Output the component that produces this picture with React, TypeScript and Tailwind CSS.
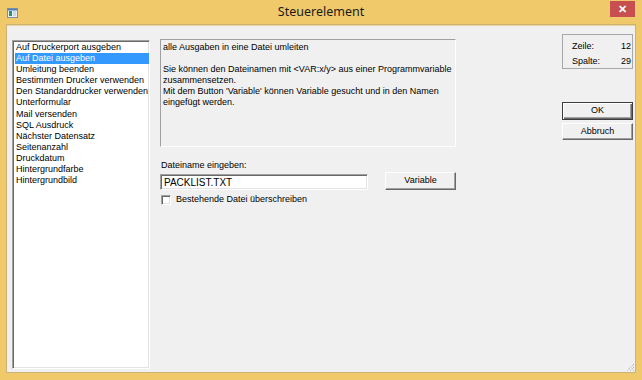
const items = [
  "Auf Druckerport ausgeben",
  "Auf Datei ausgeben",
  "Umleitung beenden",
  "Bestimmten Drucker verwenden",
  "Den Standarddrucker verwenden",
  "Unterformular",
  "Mail versenden",
  "SQL Ausdruck",
  "Nächster Datensatz",
  "Seitenanzahl",
  "Druckdatum",
  "Hintergrundfarbe",
  "Hintergrundbild",
];

const sunken =
  "border border-t-[#a0a0a0] border-l-[#a0a0a0] border-r-white border-b-white shadow-[inset_1px_1px_0_#696969,inset_-1px_-1px_0_#e3e3e3]";
const raised =
  "border border-t-white border-l-white border-r-[#696969] border-b-[#696969] shadow-[inset_-1px_-1px_0_#a0a0a0] bg-[#f0f0f0]";

function WinIcon() {
  return (
    <svg width="11" height="10" viewBox="0 0 11 10">
      <rect x="0.5" y="0.5" width="10" height="9" fill="#e8eef4" stroke="#7b8ea3" />
      <rect x="1" y="1" width="9" height="1.5" fill="#4f7fb8" />
      <rect x="2" y="3" width="3" height="5" fill="#2f8f6f" />
      <rect x="6" y="3" width="3" height="5" fill="#cfd8e2" />
    </svg>
  );
}

function Grip() {
  return (
    <svg width="9" height="9" viewBox="0 0 9 9" className="absolute bottom-0 right-0">
      <path d="M8 1 L1 8 M8 4 L4 8 M8 7 L7 8" stroke="#9a9a9a" strokeWidth="1" strokeDasharray="1 1" />
    </svg>
  );
}

export default function App() {
  return (
    <div
      className="flex h-[380px] w-[642px] flex-col bg-[#f0c96a] text-black"
      style={{ fontFamily: '"Liberation Sans", Arial, sans-serif' }}
    >
      <div className="grid h-[25px] grid-cols-[1fr_auto_1fr] items-start">
        <div className="pl-[7px] pt-[8px]">
          <WinIcon />
        </div>
        <div
          className="pt-[4px] text-[12.5px] leading-[16px] text-[#1b1b1b]"
          style={{ fontFamily: '"Noto Sans", "Open Sans", sans-serif' }}
        >
          Steuerelement
        </div>
        <div className="flex justify-end pr-[7px] pt-[1px]">
          <div className="flex h-[16px] w-[25px] items-center justify-center bg-[#c74f4f] text-[11px] font-bold leading-none text-white">
            ✕
          </div>
        </div>
      </div>

      <div className="relative mx-[7px] mb-[8px] flex flex-1 items-start border-t border-[#e9d49a] bg-[#f0f0f0] pl-[5px] shadow-[0_0_0_1px_#cdb278]">
        <div className={`mt-[14px] h-[329px] w-[138px] overflow-hidden bg-white pl-[2px] pt-[1px] ${sunken}`}>
          {items.map((t, i) => (
            <div
              key={t}
              className={`whitespace-nowrap pl-[1px] text-[9px] leading-[11.1px] ${
                i === 1 ? "bg-[#3399ff] text-white" : ""
              }`}
            >
              {t}
            </div>
          ))}
        </div>

        <div className="ml-[10px] mt-[13px] flex w-[296px] flex-col">
          <div className={`h-[108px] px-[2px] pt-[2px] text-[9px] leading-[11px] ${sunken} shadow-none`}>
            <p>alle Ausgaben in eine Datei umleiten</p>
            <p className="mt-[11px]">
              Sie können den Dateinamen mit &lt;VAR:x/y&gt; aus einer Programmvariable zusammensetzen.
            </p>
            <p>Mit dem Button 'Variable' können Variable gesucht und in den Namen eingefügt werden.</p>
          </div>

          <div className="mt-[13px] pl-[1px] text-[9px] leading-[11px]">Dateiname eingeben:</div>
          <div className="mt-[1px] flex items-end justify-between">
            <div className={`flex h-[16px] w-[208px] items-center bg-white pl-[3px] text-[10px] ${sunken}`}>
              PACKLIST.TXT
            </div>
            <button
              type="button"
              className={`flex h-[18px] w-[71px] items-center justify-center text-[9px] ${raised}`}
            >
              Variable
            </button>
          </div>
          <label className="mt-[4px] flex items-center gap-[5px] pl-[1px] text-[9px] leading-[11px]">
            <span className={`h-[10px] w-[10px] bg-white ${sunken}`} />
            Bestehende Datei überschreiben
          </label>
        </div>

        <div className="ml-[106px] mt-[8px] flex w-[71px] flex-col">
          <div className="h-[35px] border border-[#a8a8a8] pl-[9px] pr-[1px] pt-[4px] text-[9px] leading-[15px]">
            <div className="flex justify-between">
              <span>Zeile:</span>
              <span>12</span>
            </div>
            <div className="flex justify-between">
              <span>Spalte:</span>
              <span>29</span>
            </div>
          </div>
          <button
            type="button"
            className="mt-[33px] h-[18px] border border-[#3c3c3c] bg-[#f0f0f0] text-[9px] shadow-[inset_1px_1px_0_white,inset_-1px_-1px_0_#696969,inset_-2px_-2px_0_#a0a0a0]"
          >
            OK
          </button>
          <button type="button" className={`mt-[3px] h-[17px] text-[9px] ${raised}`}>
            Abbruch
          </button>
        </div>

        <Grip />
      </div>
    </div>
  );
}
